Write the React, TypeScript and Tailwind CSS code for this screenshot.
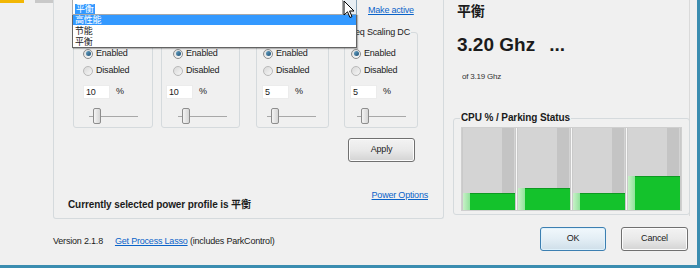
import React from 'react'

const sans = "font-['Liberation_Sans','Noto_Sans_CJK_SC',sans-serif]"
const cjk = "font-['Noto_Sans_CJK_SC','Liberation_Sans',sans-serif]"

function Radio({ checked }: { checked: boolean }) {
  return checked ? (
    <span className="w-[10px] h-[10px] rounded-full border border-[#8c8c8c] bg-gradient-to-br from-[#dcdcdc] to-[#fbfbfb] flex items-center justify-center">
      <span className="w-[5px] h-[5px] rounded-full bg-gradient-to-br from-[#6aa6c8] to-[#1d4f74]" />
    </span>
  ) : (
    <span className="w-[10px] h-[10px] rounded-full border border-[#b9b9b9] bg-gradient-to-br from-[#d9d9d9] to-[#f6f6f6]" />
  )
}

type GroupProps = {
  label: string
  value: string
  w: string
  ml: string
  radioPl: string
  inputPl: string
  sliderPl: string
}

function Group({ label, value, w, ml, radioPl, inputPl, sliderPl }: GroupProps) {
  return (
    <fieldset className={`${w} ${ml} border border-[#d5dadd] rounded-[3px] pb-[3px]`}>
      <legend className="ml-[9px] px-[1px] h-[10px] text-[9px] leading-[10px] whitespace-nowrap">{label}</legend>
      <div className={`${radioPl} pt-[8px]`}>
        <div className="h-[17px] flex items-center gap-[3px]">
          <Radio checked />
          <span>Enabled</span>
        </div>
        <div className="h-[17px] flex items-center gap-[3px]">
          <Radio checked={false} />
          <span>Disabled</span>
        </div>
      </div>
      <div className={`${inputPl} mt-[6px] flex items-center`}>
        <div className="w-[27px] h-[14px] bg-white border border-[#ececec] pl-[2px] leading-[12px]">{value}</div>
        <span className="ml-[6px]">%</span>
      </div>
      <div className={`${sliderPl} mt-[9px] h-[16px] flex items-center`}>
        <div className="w-[4px] h-px bg-[#a8a8a8]" />
        <div className="w-[8px] h-[16px] rounded-[2px] border border-[#8d8d8d] bg-gradient-to-r from-[#f4f4f4] to-[#d6d6d6]" />
        <div className="w-[37px] h-px bg-[#a8a8a8]" />
      </div>
    </fieldset>
  )
}

const bars = [17, 22, 17, 34]

function CpuChart() {
  return (
    <div className="w-[221px] h-[84px] border border-[#cfcfcf] bg-[#f7f7f7] flex gap-px">
      {bars.map((h, i) => (
        <div key={i} className="w-[54px] flex flex-col border-x border-[#c9c9c9]">
          <div className="flex-1 flex">
            <div className="flex-1 bg-[#d4d4d4]" />
            <div className="w-[12px] bg-[#c4c4c4]" />
            <div className="w-[1px] bg-[#d4d4d4]" />
          </div>
          <div className="flex" style={{ height: h }}>
            <div className="w-[7px] bg-gradient-to-r from-[#c8f0c8] to-[#8fe39a]" />
            <div className="flex-1 bg-[#14c22c] border-t border-[#0e9a22]" />
          </div>
        </div>
      ))}
    </div>
  )
}

function Cursor() {
  return (
    <svg width="13" height="19" viewBox="0 0 13 19" className="block">
      <path d="M1 1 L1 15 L4.5 11.8 L7 17.5 L9 16.6 L6.6 11 L11 11 Z" fill="#fff" stroke="#000" strokeWidth="1" strokeLinejoin="round" />
    </svg>
  )
}

export default function App() {
  return (
    <div className={`relative w-[700px] h-[268px] overflow-hidden bg-[#f0f0f0] border-r-[3px] border-b-[3px] border-[#3b8db0] text-[9px] text-[#1b1b1b] tracking-[-0.2px] ${sans}`}>
      <div className="flex h-[219px]">
        {/* left gutter, logo mostly scrolled out of view */}
        <div className="w-[53px] relative z-10 overflow-visible">
          <div className="flex items-start">
            <div className="w-[34px] h-[3px] bg-[#f2b705]" />
            <div className="ml-[11px] w-[26px] h-[3px] bg-[#c9c9c9]" />
          </div>
        </div>

        {/* power profile group */}
        <div className="w-[391px] h-[219px] border-x border-b border-[#d5dadd] rounded-b-[3px]">
          <div className="flex pl-[19px] mt-[27px]">
            <Group label="" value="10" w="w-[80px]" ml="ml-0" radioPl="pl-[9px]" inputPl="pl-[9px]" sliderPl="pl-[15px]" />
            <Group label="" value="10" w="w-[79px]" ml="ml-[8px]" radioPl="pl-[11px]" inputPl="pl-[4px]" sliderPl="pl-[16px]" />
            <Group label="" value="5" w="w-[73px]" ml="ml-[16px]" radioPl="pl-[6px]" inputPl="pl-[5px]" sliderPl="pl-[10px]" />
            <Group label="eq Scaling DC" value="5" w="w-[74px]" ml="ml-[15px]" radioPl="pl-[6px]" inputPl="pl-[5px]" sliderPl="pl-[12px]" />
          </div>

          <button className="ml-[294px] mt-[10px] w-[67px] h-[24px] rounded-[3px] border border-[#707070] bg-gradient-to-b from-[#f3f3f3] via-[#e9e9e9] to-[#d3d3d3] shadow-[inset_0_0_0_1px_#fcfcfc]">
            Apply
          </button>

          <div className="mt-[27px] pl-[14px] pr-[15px] flex items-end justify-between">
            <span className={`text-[10px] font-bold leading-[12px] tracking-[-0.1px] ${sans}`}>Currently selected power profile is 平衡</span>
            <span className="mb-[8px] text-[#0a63c9] underline">Power Options</span>
          </div>
        </div>

        {/* right status column */}
        <div className="w-[246px] h-[216px] border-r border-[#dadada]">
          <div className={`pl-[13px] pt-[1px] text-[14px] font-bold leading-[18px] ${cjk}`}>平衡</div>
          <div className="pl-[13px] mt-[16px] flex items-baseline text-[19px] font-bold leading-[20px] tracking-[0px]">
            <span>3.20 Ghz</span>
            <span className="ml-[14px]">...</span>
          </div>
          <div className="pl-[18px] mt-[17px] text-[8px] leading-[10px] text-[#333]">of 3.19 Ghz</div>

          <fieldset className="ml-[9px] mt-[30px] w-[237px] border border-[#d5dadd] rounded-[3px] pb-[3px]">
            <legend className="ml-[6px] px-[1px] text-[10px] font-bold leading-[12px] tracking-[-0.1px]">CPU % / Parking Status</legend>
            <div className="ml-[7px] mt-[3px]">
              <CpuChart />
            </div>
          </fieldset>
        </div>
      </div>

      {/* bottom row */}
      <div className="flex items-start h-[46px]">
        <div className="pl-[53px] pt-[16px] flex gap-[12px] whitespace-nowrap">
          <span>Version 2.1.8</span>
          <span>
            <span className="text-[#0a63c9] underline">Get Process Lasso</span> (includes ParkControl)
          </span>
        </div>
        <div className="ml-auto mr-[9px] mt-[8px] flex gap-[15px]">
          <button className="w-[66px] h-[24px] rounded-[3px] border border-[#3c7fb1] bg-gradient-to-b from-[#f1f8fc] via-[#e3eef5] to-[#cfdfe9] shadow-[inset_0_0_0_1px_#dff1fb]">
            OK
          </button>
          <button className="w-[67px] h-[24px] rounded-[3px] border border-[#707070] bg-gradient-to-b from-[#f3f3f3] via-[#e9e9e9] to-[#d3d3d3] shadow-[inset_0_0_0_1px_#fcfcfc]">
            Cancel
          </button>
        </div>
      </div>

      {/* open profile dropdown */}
      <div className={`absolute top-0 left-[72px] z-20 w-[285px] ${cjk}`}>
        <div className="flex h-[15px]">
          <div className="w-[271px] h-[15px] bg-white border-x border-b border-[#a9a9a9] pl-[2px] pt-[2px]">
            <span className="bg-[#3399ff] text-white text-[9px] leading-[10px] px-px inline-block">平衡</span>
          </div>
          <div className="w-[14px] h-[15px] bg-[#e8eef3] border-b border-r border-[#8aa4b8]">
            <Cursor />
          </div>
        </div>
        <div className="w-[285px] -mt-px bg-white border border-[#646464] shadow-[1px_1px_1px_rgba(0,0,0,0.25)] text-[9px] leading-[10px]">
          <div className="h-[10px] bg-[#3399ff] text-white pl-[2px]">高性能</div>
          <div className="h-[10px] pl-[2px] mt-px">节能</div>
          <div className="h-[10px] pl-[2px] mt-px">平衡</div>
        </div>
      </div>

      <span className="absolute top-[5px] left-[368px] text-[#0a63c9] underline leading-[10px]">Make active</span>
    </div>
  )
}
